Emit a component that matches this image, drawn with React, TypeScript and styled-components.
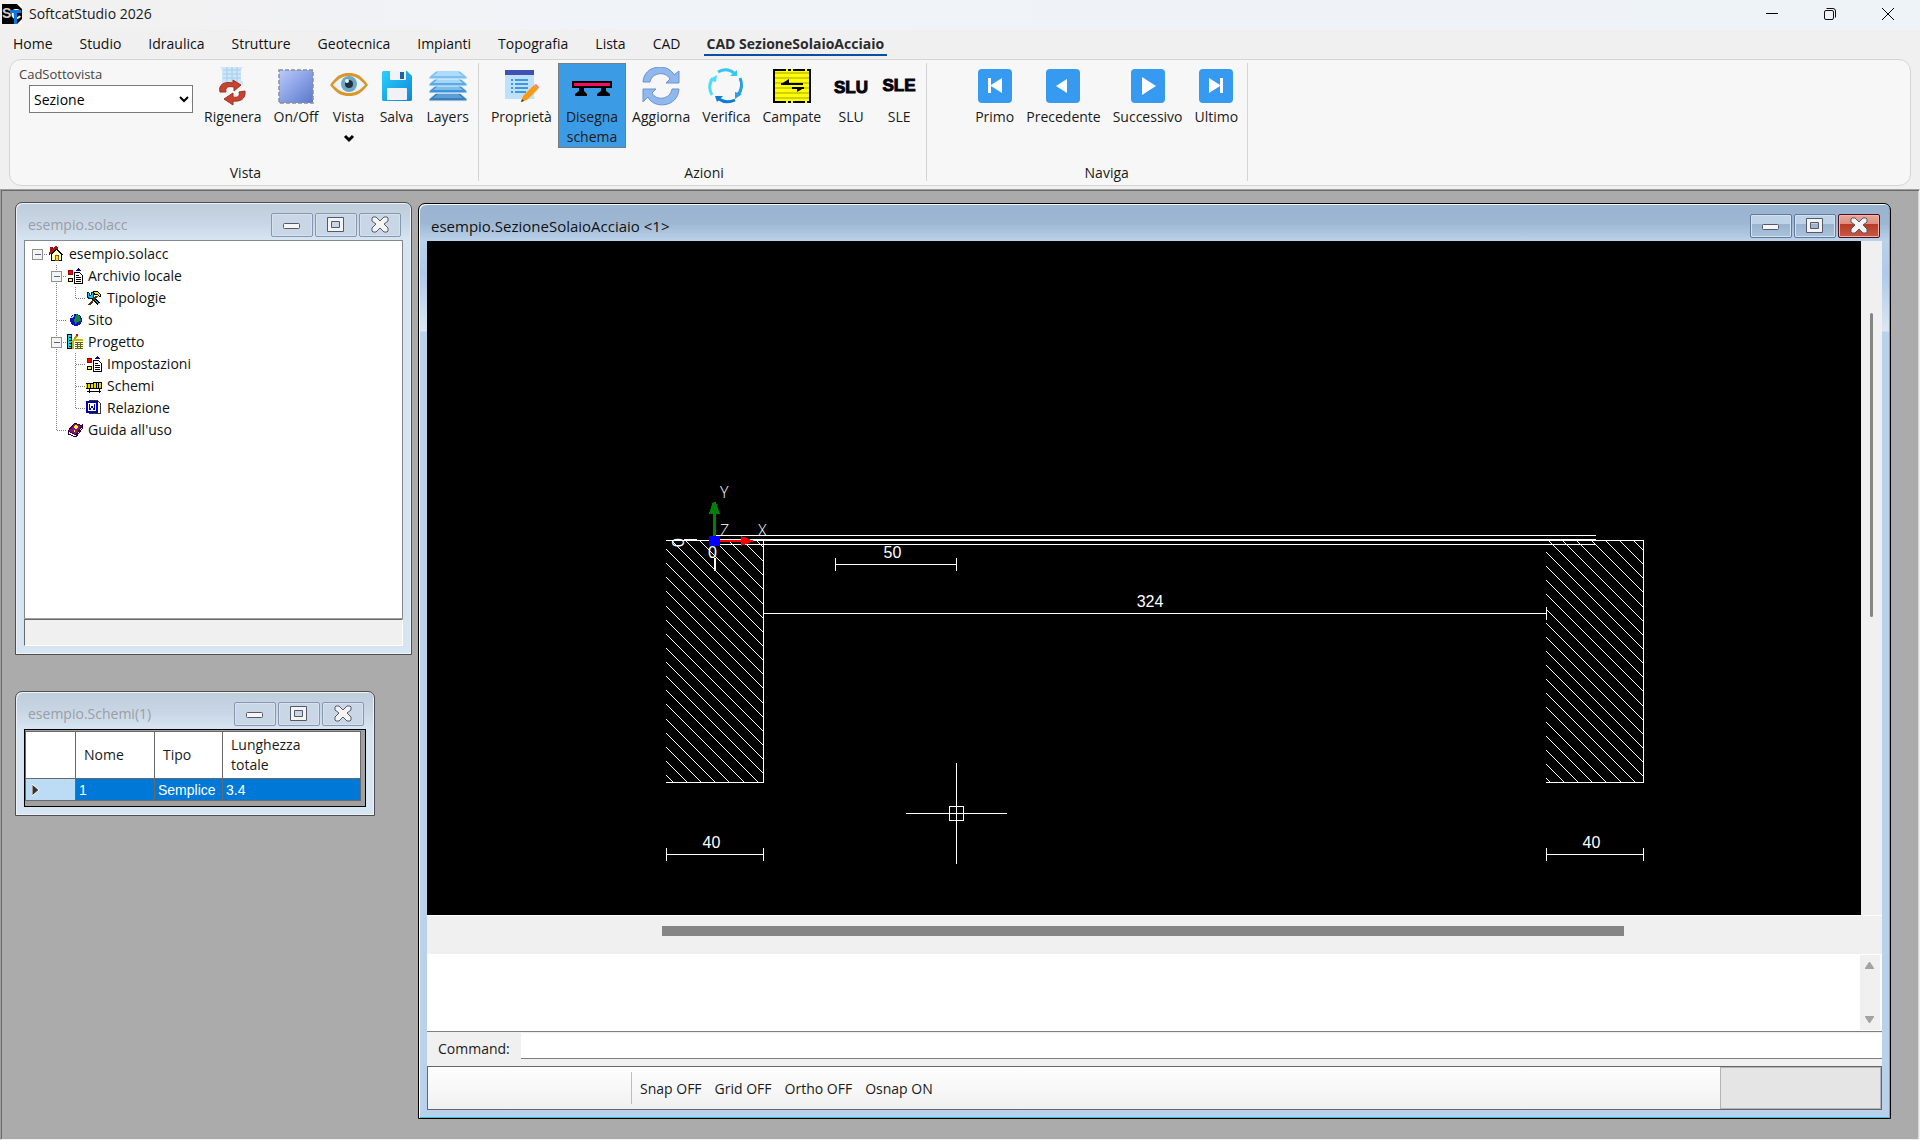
import React from 'react';
import styled, { createGlobalStyle, css } from 'styled-components';

const GlobalStyle = createGlobalStyle`
  *, *::before, *::after { box-sizing: border-box; }
  body {
    margin: 0;
    background: #f0f0f0;
    color: #1a1a1a;
    font: 14px/20px "Open Sans", "Noto Sans", sans-serif;
  }
  button, input, select, textarea { font: inherit; color: inherit; }
  button { cursor: default; }
`;

/* ---------- application shell ---------- */

const Shell = styled.div`
  display: flex;
  flex-direction: column;
  height: 100vh;
  min-height: 1000px;
`;

const TitleBar = styled.header`
  display: flex;
  align-items: center;
  height: 29px;
  padding: 0 3px 1px 2px;
  gap: 7px;
  background: linear-gradient(90deg, #f3f1f0, #f0f3f8 30%, #eef3f7);
`;

const AppTitle = styled.h1`
  flex: 1;
  margin: 0;
  font-size: 14px;
  font-weight: 400;
`;

const SystemButtons = styled.div`
  display: flex;
`;

const SystemButton = styled.button`
  display: grid;
  place-items: center;
  width: 58px;
  height: 28px;
  padding: 0;
  border: 0;
  background: none;
`;

const TabBar = styled.nav`
  display: flex;
  gap: 27px;
  height: 30px;
  padding: 5px 13px 0;
`;

const Tab = styled.a<{ $active?: boolean }>`
  height: 22px;
  color: #111;
  text-decoration: none;
  ${(p) =>
    p.$active &&
    css`
      margin-left: -4px;
      padding: 0 3px;
      border-bottom: 2px solid #0b4da2;
      color: #2b2b2b;
      font-weight: 700;
    `}
`;

/* ---------- ribbon ---------- */

const Ribbon = styled.section`
  display: flex;
  height: 127px;
  margin: 0 9px 3px;
  padding: 3px 0 4px;
  border: 1px solid #d4d4d4;
  border-radius: 12px;
  background: #f7f7f7;
`;

const RibbonGroup = styled.section<{ $inset?: boolean }>`
  display: flex;
  flex-direction: column;
  justify-content: space-between;
  margin-left: ${(p) => (p.$inset ? '36px' : 0)};
  padding: 0 3px 0 6px;
  border-right: 1px solid #d4d4d4;
`;

const GroupTools = styled.div`
  display: flex;
  align-items: flex-start;
`;

const GroupName = styled.h2`
  margin: 0;
  font-size: 14px;
  font-weight: 400;
  line-height: 16px;
  text-align: center;
`;

const SubviewField = styled.div`
  display: flex;
  flex-direction: column;
  gap: 1px;
  width: 182px;
  padding: 1px 5px 0 3px;
`;

const SubviewLabel = styled.label`
  color: #444;
  font-size: 13px;
`;

const SubviewSelect = styled.select`
  height: 28px;
  margin-left: 10px;
  border: 1px solid #7a7a7a;
  border-radius: 0;
  background: #fff;
  color: #000;
`;

const ToolButton = styled.button<{ $active?: boolean }>`
  display: flex;
  flex-direction: column;
  align-items: center;
  min-width: 48px;
  padding: 3px ${(p) => (p.$active ? 7 : 5)}px 0;
  border: 1px solid ${(p) => (p.$active ? '#7c7c7c' : 'transparent')};
  background: ${(p) => (p.$active ? '#3c9be5' : 'none')};
  white-space: pre;

  svg {
    display: block;
    margin: 0 -2px;
  }
`;

/* ---------- MDI desktop ---------- */

const Desktop = styled.main`
  position: relative;
  flex: 1;
  overflow: hidden;
  border: 1px solid;
  border-color: #a0a0a0 #f0f0f0 #f0f0f0 #a0a0a0;
  background: #ababab;
  box-shadow: inset 1px 1px #696969, inset -1px 0 #d8d8d8;
`;

const activeFrame = css`
  border-color: #000;
  background: linear-gradient(#99b3d0 0, #9db7d3 19px, #b9d1ea 37px, #afc9e8 70px, #dbe7f4 127px, #b9d1ea 128px);
  box-shadow: inset 1px 1px #fff, inset -1px -1px #35c0dc;
`;

const idleFrame = css`
  border-color: #4e4e4e;
  background: linear-gradient(#bfcddb 0, #c8d5e4 19px, #d7e4f2 37px);
  box-shadow: inset 1px 1px #eef3f9, inset -1px -1px #eef3f9;
`;

const Frame = styled.section<{ $active?: boolean }>`
  position: absolute;
  display: flex;
  flex-direction: column;
  padding: 0 8px 8px;
  border: 1px solid;
  border-radius: 7px 7px 0 0;
  ${(p) => (p.$active ? activeFrame : idleFrame)}
`;

const TreeFrame = styled(Frame)`
  left: 14px;
  top: 12px;
  width: 397px;
  height: 453px;
`;

const SchemeFrame = styled(Frame)`
  left: 14px;
  top: 501px;
  width: 360px;
`;

const CadFrame = styled(Frame)`
  left: 417px;
  right: 28px;
  top: 13px;
  bottom: 20px;
`;

const FrameBar = styled.header`
  display: flex;
  flex: none;
  gap: 2px;
  height: 37px;
  padding: 10px 2px 0 4px;
`;

const FrameTitle = styled.h3<{ $active?: boolean }>`
  flex: 1;
  margin: 0;
  color: ${(p) => (p.$active ? '#111' : '#9a9ea4')};
  font-size: ${(p) => (p.$active ? 15 : 14)}px;
  font-weight: 400;
  line-height: 24px;
`;

const frameButtonFill = {
  idle: 'background: #c9d6e5; border-color: #8797b3; box-shadow: inset 0 0 0 1px #d6e1ed;',
  active:
    'background: linear-gradient(#bfd3e8 42%, #9ab3cf 43%, #a9c2dc); border-color: #64799a; box-shadow: inset 0 0 0 1px #d3e2f1;',
  close:
    'background: linear-gradient(#e8a799, #dc8c7d 42%, #b83a24 43%, #c65a45); border-color: #4a1020; box-shadow: inset 0 0 0 1px #eeb4a8;',
};

const FrameButton = styled.button<{ $fill: keyof typeof frameButtonFill }>`
  display: grid;
  place-items: center;
  width: 42px;
  height: 24px;
  padding: 0;
  border: 1px solid;
  border-radius: 2px;
  ${(p) => frameButtonFill[p.$fill]}
`;

/* ---------- project tree ---------- */

const Tree = styled.ul`
  flex: 1;
  margin: 0;
  padding: 2px 3px;
  border: 1px solid #828790;
  background: #fff;
  list-style: none;
`;

const TreeRow = styled.li`
  display: flex;
  align-items: center;
  height: 22px;
`;

const TreeText = styled.span`
  margin-left: 5px;
  color: #111;
`;

const Expander = styled.button`
  width: 19px;
  height: 22px;
  padding: 0;
  border: 0;
  background: none;
`;

const TreeStatus = styled.div`
  height: 27px;
  border: 1px solid;
  border-color: #696969 #fff #fff #696969;
  background: #f0f0f0;
  box-shadow: 0 -1px #a0a0a0;
`;

/* ---------- scheme table ---------- */

const GridBox = styled.div`
  padding: 1px 5px 5px 0;
  border: 1px solid #000;
  background: #a0a0a0;
`;

const Grid = styled.table`
  width: 100%;
  table-layout: fixed;
  border-collapse: collapse;
  background: #fff;
`;

const HeadCell = styled.th<{ $width: number }>`
  width: ${(p) => p.$width}px;
  height: 47px;
  padding: 0 8px;
  border: 1px solid #696969;
  font-weight: 400;
  text-align: left;
`;

const Cell = styled.td`
  height: 22px;
  padding: 0 3px;
  border: 1px solid #696969;
  background: #0078d7;
  color: #fff;
  font: 14px/20px "Liberation Sans", sans-serif;
`;

const RowHead = styled.th`
  padding: 0 6px;
  border: 1px solid #696969;
  background: #bbdcf4;
  text-align: left;

  svg { display: block; }
`;

/* ---------- CAD window ---------- */

const Viewport = styled.div`
  display: flex;
  flex: 1;
  min-height: 0;
`;

const Canvas = styled.svg`
  flex: 1;
  min-width: 0;
  height: 100%;
  background: #000;
`;

const VerticalTrack = styled.div`
  display: flex;
  justify-content: center;
  width: 21px;
  padding: 72px 0 0;
  background: #f0f0f0;
`;

const VerticalThumb = styled.div`
  width: 3px;
  height: 304px;
  background: #858585;
  border-radius: 2px;
`;

const HorizontalTrack = styled.div`
  height: 39px;
  padding: 10px 258px 0 235px;
  border-top: 1px solid #fff;
  background: #f0f0f0;
`;

const HorizontalThumb = styled.div`
  height: 10px;
  background: #858585;
`;

const LogRow = styled.div`
  display: flex;
  height: 78px;
  padding: 1px 2px 1px 0;
  border-bottom: 1px solid #7f7f7f;
  background: #fff;
`;

const Log = styled.textarea`
  flex: 1;
  padding: 4px;
  border: 0;
  outline: 0;
  resize: none;
  background: #fff;
`;

const LogScroll = styled.div`
  display: flex;
  flex-direction: column;
  justify-content: space-between;
  width: 20px;
  background: #f0f0f0;
`;

const ScrollArrow = styled.button`
  display: grid;
  place-items: center;
  height: 21px;
  padding: 0 1px 0 0;
  border: 0;
  background: none;
`;

const CommandRow = styled.div`
  display: flex;
  height: 34px;
  padding: 1px 0 7px 11px;
  background: #f0f0f0;
`;

const CommandLabel = styled.label`
  width: 83px;
  line-height: 32px;
`;

const CommandInput = styled.input`
  flex: 1;
  min-width: 0;
  padding: 0 4px;
  border: 0;
  border-bottom: 1px solid #7f7f7f;
  outline: 0;
  background: #fff;
`;

const StatusBar = styled.footer`
  display: flex;
  align-items: center;
  height: 44px;
  border: 1px solid #666;
  background: linear-gradient(#fdfdfd, #f8f8f8 50%, #f0f0f0);
`;

const Coordinates = styled.div`
  width: 204px;
  height: 32px;
  border-right: 1px solid #bdbdbd;
`;

const Modes = styled.div`
  display: flex;
  flex: 1;
  gap: 13px;
  padding: 2px 0 0 8px;
`;

const ModeButton = styled.button`
  padding: 0;
  border: 0;
  background: none;
`;

const StatusPane = styled.div`
  width: 161px;
  height: 42px;
  border: 1px solid #b4b4b4;
  background: #e5e5e5;
`;

/* ---------- icons ---------- */

const AppLogo = () => (
  <svg width="20" height="20" viewBox="0 0 20 20" fontFamily="Liberation Sans, sans-serif" fontWeight="700" fontSize="14">
    <rect width="20" height="20" fill="#000" />
    <path d="M15 0h5v5zM15 20h5v-5z" fill="#fff" />
    <text x="0" y="14" fill="#d8cccb">S</text>
    <text x="9" y="15" fill="#fff">C</text>
    <path d="M8 6h11v3h-4v11h-3V9H8z" fill="#0a78e0" />
  </svg>
);

type IconProps = { children: React.ReactNode };
const Icon40 = ({ children }: IconProps) => (
  <svg width="40" height="40" viewBox="0 0 40 40" aria-hidden="true">{children}</svg>
);

const RegenerateIcon = () => (
  <Icon40>
    <path d="M7 0h23l-2 3v10l2 2v3H9V3z" fill="#cfe6fa" />
    <path d="M10 3h18M10 7h18M10 11h18M14 0v15M19 0v15M24 0v15" stroke="#a3cdf0" />
    <path d="M7 25c-2-7 4-11 13-9v-3l8 5-7 6v-4c-6-1-9 0-8 5z" fill="#c8432f" stroke="#9c3324" />
    <path d="M32 24c1 8-5 11-12 10v4l-9-6 9-6v4c5 1 7-1 6-5z" fill="#c8432f" stroke="#9c3324" />
  </Icon40>
);

const ToggleIcon = () => (
  <Icon40>
    <defs>
      <linearGradient id="toggle" x1="0" y1="0" x2="1" y2="1">
        <stop offset="0" stopColor="#bccbfb" /><stop offset="1" stopColor="#5877cd" />
      </linearGradient>
    </defs>
    <rect x="3" y="3" width="34" height="33" fill="url(#toggle)" />
    <rect x="3" y="3" width="34" height="33" fill="none" stroke="#8a8e9c" strokeWidth="1.5" strokeDasharray="4 2" />
  </Icon40>
);

const EyeIcon = () => (
  <Icon40>
    <path d="M1 18C8 8 13 6 20 6s12 2 19 12c-7 9-12 11-19 11S8 27 1 18z" fill="#d9962a" />
    <path d="M4 18C10 11 14 9 20 9s10 2 16 9c-6 6-10 8-16 8S10 24 4 18z" fill="#e9f5fb" />
    <circle cx="20" cy="17" r="8" fill="#6ea6c4" />
    <circle cx="20" cy="17" r="4" fill="#22313c" />
    <circle cx="18" cy="14" r="2" fill="#dff0f8" />
  </Icon40>
);

const SaveIcon = () => (
  <Icon40>
    <defs>
      <linearGradient id="disk" x1="0" y1="0" x2="1" y2="1">
        <stop offset="0" stopColor="#2cd0fb" /><stop offset="1" stopColor="#0d86d8" />
      </linearGradient>
    </defs>
    <path d="M6 4h24l5 5v24l-1 1H6l-1-1V5z" fill="url(#disk)" />
    <path d="M13 4h16v8q0 1-1 1H14q-1 0-1-1z" fill="#f1f1f6" />
    <rect x="23" y="5" width="4" height="7" fill="#1b62ad" />
    <rect x="10" y="21" width="20" height="12" rx="1" fill="#f1f1f6" />
  </Icon40>
);

const LayersIcon = () => (
  <Icon40>
    {[
      { y: 26, side: '#3a7fba', top: '#5b9fd6' },
      { y: 18, side: '#4292d6', top: '#7dbdec' },
      { y: 11, side: '#5aaae6', top: '#a5d6f8' },
      { y: 4, side: '#7cc0f2', top: '#aedcfa' },
    ].map(({ y, side, top }) => (
      <g key={y}>
        <path d={`M8 ${y}h24l7 6v2H1v-2z`} fill={side} stroke="#e6f4fd" />
        <path d={`M10 ${y + 1}h20l5 4H5z`} fill={top} />
      </g>
    ))}
  </Icon40>
);

const PropertiesIcon = () => (
  <Icon40>
    <rect x="4" y="4" width="29" height="28" fill="#bfe0fb" />
    <rect x="4" y="3" width="29" height="5" fill="#3f51b5" />
    <path d="M10 13h2M14 13h13M10 17h2M14 17h13M10 21h2M14 21h13M10 25h2M14 25h11" stroke="#3d97e6" strokeWidth="2" />
    <path d="M20 35l2-6 11-11 4 4-11 11z" fill="#fb9a12" />
    <path d="M33 18l2-1 3 3-1 2z" fill="#ef7d7d" />
    <path d="M20 35l1-3 2 2z" fill="#333" />
  </Icon40>
);

const BeamIcon = () => (
  <Icon40>
    <rect x="0" y="14" width="40" height="7" fill="#000" />
    <rect x="2" y="16" width="36" height="3" fill="#fb0a60" />
    <path d="M7 21h5v3l3 3v2H3v-2l4-3zM29 21h5v3l4 3v2H25v-2l4-3z" fill="#000" />
  </Icon40>
);

const RefreshIcon = () => (
  <Icon40>
    <g fill="#8fb8ef" stroke="#6b93cf">
      <path d="M2 15C3-3 28-4 33 8l5-4v12H25l4-4C25 4 11 5 9 15z" />
      <path d="M38 22c-1 19-26 20-31 8l-5 5V22h13l-4 4c4 8 18 7 20-4z" />
    </g>
  </Icon40>
);

const VerifyIcon = () => (
  <Icon40>
    <g fill="none" strokeWidth="3">
      <path d="M12 5q9-5 16 1" stroke="#36c5f5" />
      <path d="M34 11q4 9-2 17" stroke="#2a9ee6" />
      <path d="M29 33q-9 4-16-1" stroke="#0d7cd6" />
      <path d="M6 28q-5-9 1-17" stroke="#4fdcfb" />
    </g>
    <path d="M24 9h7V3z" fill="#36c5f5" /><path d="M29 25v7l7-5z" fill="#2a9ee6" />
    <path d="M9 29h8l-6 6z" fill="#0d7cd6" /><path d="M3 13l8-5-1 7z" fill="#4fdcfb" />
  </Icon40>
);

const SpansIcon = () => (
  <Icon40>
    <rect x="2" y="2" width="36" height="34" fill="#ff0" />
    <path d="M2 6h36M2 11h36M2 16h36M2 21h36M2 26h36M2 31h36" stroke="#d2d200" strokeWidth="2" />
    <path d="M2 3h36M2 35h36" stroke="#000" strokeWidth="2" strokeDasharray="12 2 3 2" />
    <path d="M2 2v34M38 2v34" stroke="#000" strokeWidth="2" />
    <path d="M9 17h22M20 21h12" stroke="#000" strokeWidth="2" />
    <path d="M9 17l8-5v5zM32 21l-7 4v-4z" fill="#000" />
  </Icon40>
);

const LimitStateIcon = ({ name, baseline }: { name: string; baseline: number }) => (
  <Icon40>
    <text
      x="20" y={baseline}
      fontFamily="Liberation Sans, sans-serif" fontWeight="700" fontSize="17" textAnchor="middle"
      fill="#05050f" stroke="#05050f"
    >
      {name}
    </text>
  </Icon40>
);

const NavIcon = ({ d }: { d: string }) => (
  <Icon40>
    <rect x="3" y="2" width="34" height="34" rx="4" fill="#369af0" />
    <path d={d} fill="#fff" />
  </Icon40>
);

const ChevronIcon = () => (
  <svg width="12" height="20" viewBox="0 0 12 20" aria-hidden="true">
    <path d="M2 9l4 4 4-4" fill="none" stroke="#000" strokeWidth="3" />
  </svg>
);

const Icon16 = ({ children }: IconProps) => (
  <svg width="16" height="16" viewBox="0 0 16 16" shapeRendering="crispEdges" aria-hidden="true">
    {children}
  </svg>
);

const HouseIcon = () => (
  <Icon16>
    <path d="M3.5 8v6.5h10V8l-5-5z" fill="#ffffc8" stroke="#000" />
    <path d="M1 9l7-7 7 7" fill="none" stroke="#000" />
    <path d="M1 8l7-7 2 2" fill="none" stroke="#b01010" strokeWidth="2" />
    <path d="M2 1h3v5H2z" fill="#a01010" />
    <path d="M7.5 9.5h3v5h-3z" fill="#ffe000" stroke="#806000" />
  </Icon16>
);

const ArchiveIcon = () => (
  <Icon16>
    <rect x="1" y="2" width="5" height="5" fill="#900" />
    <rect x="2" y="3" width="3" height="3" fill="#f00" />
    <circle cx="3.5" cy="12" r="2" fill="#ff0" stroke="#000" />
    <path d="M8 3h7L11.5 0z" fill="#00009c" />
    <path d="M7.500 4.500h5l3 3v8h-8z" fill="#fff" stroke="#000" />
    <path d="M9 7.5h3M9 9.500h5M9 11.500h5M9 13.500h5" stroke="#000" />
  </Icon16>
);

const ToolsIcon = () => (
  <Icon16>
    <path d="M5 6l8 8" stroke="#000" strokeWidth="3" />
    <path d="M1 2l2 1v2h2l1-3 2 2-1 4-3 1-3-2z" fill="#18c8e8" stroke="#024" />
    <path d="M6 7l7 7" stroke="#18c8e8" />
    <path d="M11 6l-8 9" stroke="#503000" strokeWidth="2" />
    <path d="M7 2l4-1 4 4-1 2-3-3-2 1z" fill="#ffe800" stroke="#000" />
  </Icon16>
);

const GlobeIcon = () => (
  <Icon16>
    <circle cx="9" cy="8" r="6" fill="#1010c0" />
    <path d="M9 2l4 2 1 5-4 1-1 3-2-4 1-3z" fill="#108838" />
    <path d="M4 5l2-2 1 1-2 3z" fill="#b0d8ff" />
  </Icon16>
);

const ProjectIcon = () => (
  <Icon16>
    <rect x="0.5" y="0.5" width="4" height="14" fill="#18d8e8" stroke="#000" />
    <path d="M2 3.5h2M2 6.5h2M2 9.5h2M2 12.5h2" stroke="#000" />
    <path d="M5 8l5-6" stroke="#b0a000" strokeWidth="2" />
    <path d="M9 0h2v2h-2z" fill="#f00" />
    <path d="M6 6h10M6 6v9" stroke="#c8b800" strokeWidth="2" />
    <path d="M8 8.5h8M8 10.5h8M8 12.5h8M8 14.5h8M10.5 9v6M13.5 9v6" stroke="#6a6400" />
  </Icon16>
);

const SchemeIcon = () => (
  <Icon16>
    <path d="M0 6h7v5H0zM7 4h9v7H7z" fill="#e8d800" />
    <path
      d="M1.5 6v5M4.5 6v5M7.5 5v6M10.5 5v6M12.5 5v6M15.5 4v7M7 4.5h9M0 5.5h7M0 10.5h16M1 13.5h14M3.5 11v4M13.5 11v4"
      stroke="#000"
    />
  </Icon16>
);

const ReportIcon = () => (
  <Icon16>
    <path d="M3.5 0.5h8l3 3v10h-11z" fill="#fff" stroke="#333" />
    <rect x="1" y="2" width="10" height="10" fill="#fff" stroke="#0000a8" strokeWidth="2" />
    <path d="M3 4l1 6 2-4 2 4 1-6" fill="none" stroke="#0000c8" />
  </Icon16>
);

const HelpBookIcon = () => (
  <Icon16>
    <path d="M1 9l7-8 7 3-6 9z" fill="#8c0a8c" stroke="#300030" />
    <path d="M1 9v3l8 3 6-8V4l-6 9z" fill="#fff" stroke="#300030" />
    <path d="M7 5l2-1 1 1-2 2M7 9h1" fill="none" stroke="#ff0" strokeWidth="2" />
  </Icon16>
);

/* ---------- ribbon data ---------- */

type Tool = { label: string; icon: React.ReactNode; active?: boolean; menu?: boolean };

const viewTools: Tool[] = [
  { label: 'Rigenera', icon: <RegenerateIcon /> },
  { label: 'On/Off', icon: <ToggleIcon /> },
  { label: 'Vista', icon: <EyeIcon />, menu: true },
  { label: 'Salva', icon: <SaveIcon /> },
  { label: 'Layers', icon: <LayersIcon /> },
];

const actionTools: Tool[] = [
  { label: 'Proprietà', icon: <PropertiesIcon /> },
  { label: 'Disegna\nschema', icon: <BeamIcon />, active: true },
  { label: 'Aggiorna', icon: <RefreshIcon /> },
  { label: 'Verifica', icon: <VerifyIcon /> },
  { label: 'Campate', icon: <SpansIcon /> },
  { label: 'SLU', icon: <LimitStateIcon name="SLU" baseline={26} /> },
  { label: 'SLE', icon: <LimitStateIcon name="SLE" baseline={24} /> },
];

const navigationTools: Tool[] = [
  { label: 'Primo', icon: <NavIcon d="M13 11h3v7l11-7v15l-11-7v7h-3z" /> },
  { label: 'Precedente', icon: <NavIcon d="M13 19l11-7v14z" /> },
  { label: 'Successivo', icon: <NavIcon d="M14 10l14 9-14 9z" /> },
  { label: 'Ultimo', icon: <NavIcon d="M27 11h-3v7l-11-7v15l11-7v7h3z" /> },
];

const Tools = ({ items }: { items: Tool[] }) => (
  <>
    {items.map((t) => (
      <ToolButton key={t.label} type="button" $active={t.active} aria-pressed={t.active}>
        {t.icon}
        {t.label}
        {t.menu && <ChevronIcon />}
      </ToolButton>
    ))}
  </>
);

const tabs = ['Home', 'Studio', 'Idraulica', 'Strutture', 'Geotecnica', 'Impianti', 'Topografia', 'Lista', 'CAD', 'CAD SezioneSolaioAcciaio'];

/* ---------- MDI window pieces ---------- */

const WindowBar = ({ title, active }: { title: string; active?: boolean }) => {
  const fill = active ? 'active' : 'idle';
  return (
    <FrameBar>
      <FrameTitle $active={active}>{title}</FrameTitle>
      <FrameButton type="button" $fill={fill} aria-label="Riduci a icona">
        <svg width="18" height="18" viewBox="0 0 18 18">
          <rect x="0.5" y="7.5" width="16" height="5" rx="1" fill="#f6f6f6" stroke="#55586a" />
        </svg>
      </FrameButton>
      <FrameButton type="button" $fill={fill} aria-label="Ingrandisci">
        <svg width="18" height="18" viewBox="0 0 18 18">
          <path fillRule="evenodd" d="M0.5 1.5h16v14h-16zM4.5 5.5v6h8v-6z" fill="#f4f4f4" stroke="#55586a" />
        </svg>
      </FrameButton>
      <FrameButton type="button" $fill={active ? 'close' : 'idle'} aria-label="Chiudi">
        <svg width="18" height="18" viewBox="0 0 18 18">
          <path
            d="M2 1h3l4 4 4-4h3l1 1v3l-4 3 4 4v3l-1 1h-3l-4-4-4 4H2l-1-1v-3l4-4-4-3V2z"
            fill="#f4f4f4" stroke="#55586a" strokeLinejoin="round"
          />
        </svg>
      </FrameButton>
    </FrameBar>
  );
};

type Guide = 'blank' | 'line' | 'tee' | 'elbow' | 'root' | 'node';

const guidePath: Record<Guide, string> = {
  blank: '',
  line: 'M9.5 0v22',
  tee: 'M9.5 0v22M10 11.5h9',
  elbow: 'M9.5 0v12M10 11.5h9',
  root: 'M10 11.5h9',
  node: 'M9.5 0v22M10 11.5h9',
};

const GuideCell = ({ kind }: { kind: Guide }) => {
  const expandable = kind === 'root' || kind === 'node';
  const drawing = (
    <svg width="19" height="22" viewBox="0 0 19 22" shapeRendering="crispEdges" display="block">
      <path d={guidePath[kind]} stroke="#808080" strokeDasharray="1 1" />
      {expandable && (
        <>
          <rect x="4.5" y="6.5" width="10" height="10" fill="#f4f4f4" stroke="#919191" />
          <path d="M7 11.5h6" stroke="#4b63a7" />
        </>
      )}
    </svg>
  );
  return expandable ? <Expander type="button" aria-label="Comprimi">{drawing}</Expander> : drawing;
};

const TreeIcon = styled.span`
  display: flex;
  padding-left: 1px;
`;

const treeRows: { guides: Guide[]; icon: React.ReactNode; text: string }[] = [
  { guides: ['root'], icon: <HouseIcon />, text: 'esempio.solacc' },
  { guides: ['blank', 'node'], icon: <ArchiveIcon />, text: 'Archivio locale' },
  { guides: ['blank', 'line', 'elbow'], icon: <ToolsIcon />, text: 'Tipologie' },
  { guides: ['blank', 'tee'], icon: <GlobeIcon />, text: 'Sito' },
  { guides: ['blank', 'node'], icon: <ProjectIcon />, text: 'Progetto' },
  { guides: ['blank', 'line', 'tee'], icon: <ArchiveIcon />, text: 'Impostazioni' },
  { guides: ['blank', 'line', 'tee'], icon: <SchemeIcon />, text: 'Schemi' },
  { guides: ['blank', 'line', 'elbow'], icon: <ReportIcon />, text: 'Relazione' },
  { guides: ['blank', 'elbow'], icon: <HelpBookIcon />, text: "Guida all'uso" },
];

/* ---------- CAD drawing; units are pixels from the section origin ---------- */

const Wall = ({ id, x, first }: { id: string; x: number; first: number }) => (
  <g>
    <clipPath id={id}><rect x={x} y="0" width="98" height="242" /></clipPath>
    <g clipPath={`url(#${id})`}>
      {Array.from({ length: 24 }, (_, k) => (
        <path key={k} d={`M${x} ${Math.round(first + (k - 7) * 14.13)}l98 98`} />
      ))}
    </g>
    <path d={`M${x} 241.5h97.5V0`} />
  </g>
);

const Dimension = ({ x, y, length, text }: { x: number; y: number; length: number; text: string }) => (
  <g>
    <path d={`M${x} ${y - 6}v13M${x + length} ${y - 6}v13M${x} ${y + 0.5}h${length}`} />
    <text x={x + length / 2 - 3.5} y={y - 6} textAnchor="middle" fill="#fff" stroke="none">{text}</text>
  </g>
);

const SectionDrawing = () => (
  <Canvas role="img" aria-label="Sezione solaio acciaio">
    <g
      transform="translate(287 300)"
      stroke="#fff" fill="none" shapeRendering="crispEdges"
      fontFamily="Liberation Sans, sans-serif" fontSize="16"
    >
      <Wall id="wall-left" x={-48} first={8} />
      <Wall id="wall-right" x={832} first={11} />
      <path d="M-48 -.5H0M882 -.5H930M2 -5.5H882M2 3.5H882" />
      <path d="M2 -1H882" strokeWidth="2" />
      <Dimension x={121.5} y={23} length={121} text="50" />
      <path d="M50 72.5H832.5M832.5 66v13" />
      <text x="436" y="66" textAnchor="middle" fill="#fff" stroke="none">324</text>
      <Dimension x={-47.5} y={313} length={97} text="40" />
      <Dimension x={832.5} y={313} length={97} text="40" />
      <path d="M-30 -1h13M1 17v13" strokeWidth="2" />
      <g fill="#fff" stroke="none">
        <text x="-6" y="17">0</text>
        <text transform="translate(-30 6) rotate(-90)">0</text>
        <g fontFamily="Open Sans, sans-serif" fontWeight="300">
          <text x="6" y="-43">Y</text>
          <text x="6" y="-5">Z</text>
          <text x="44" y="-5">X</text>
        </g>
      </g>
      <g stroke="none">
        <path d="M-1 -5v-22h-4l4-12h3l4 12H2v22z" fill="#008000" />
        <path d="M6 -1h21v-4l13 5-13 5V1H6z" fill="#f00" />
        <rect x="-5" y="-5" width="11" height="10" fill="#00f" />
      </g>
      <path d="M192 272.5H293M242.5 222V323M235.5 265.5h14v14h-14z" />
    </g>
  </Canvas>
);

/* ---------- page ---------- */

export default function App() {
  return (
    <>
      <GlobalStyle />
      <Shell>
        <TitleBar>
          <AppLogo />
          <AppTitle>SoftcatStudio 2026</AppTitle>
          <SystemButtons>
            <SystemButton type="button" aria-label="Riduci a icona">
              <svg width="12" height="12" viewBox="0 0 12 12"><path d="M0 5.5h12" stroke="#000" /></svg>
            </SystemButton>
            <SystemButton type="button" aria-label="Ripristina">
              <svg width="12" height="12" viewBox="0 0 12 12" fill="none" stroke="#111">
                <rect x=".5" y="2.5" width="9" height="9" rx="1.5" />
                <path d="M2.5 .5H9a2.5 2.5 0 0 1 2.5 2.5v6.5" />
              </svg>
            </SystemButton>
            <SystemButton type="button" aria-label="Chiudi">
              <svg width="12" height="12" viewBox="0 0 12 12"><path d="M0 0l12 12M12 0L0 12" stroke="#000" /></svg>
            </SystemButton>
          </SystemButtons>
        </TitleBar>

        <TabBar>
          {tabs.map((name, i) => (
            <Tab key={name} href="#" $active={i === tabs.length - 1}>{name}</Tab>
          ))}
        </TabBar>

        <Ribbon>
          <RibbonGroup>
            <GroupTools>
              <SubviewField>
                <SubviewLabel htmlFor="subview">CadSottovista</SubviewLabel>
                <SubviewSelect id="subview" defaultValue="Sezione">
                  <option>Sezione</option>
                </SubviewSelect>
              </SubviewField>
              <Tools items={viewTools} />
            </GroupTools>
            <GroupName>Vista</GroupName>
          </RibbonGroup>
          <RibbonGroup>
            <GroupTools><Tools items={actionTools} /></GroupTools>
            <GroupName>Azioni</GroupName>
          </RibbonGroup>
          <RibbonGroup $inset>
            <GroupTools><Tools items={navigationTools} /></GroupTools>
            <GroupName>Naviga</GroupName>
          </RibbonGroup>
        </Ribbon>

        <Desktop>
          <TreeFrame>
            <WindowBar title="esempio.solacc" />
            <Tree>
              {treeRows.map((row) => (
                <TreeRow key={row.text}>
                  {row.guides.map((g, i) => <GuideCell key={i} kind={g} />)}
                  <TreeIcon>{row.icon}</TreeIcon>
                  <TreeText>{row.text}</TreeText>
                </TreeRow>
              ))}
            </Tree>
            <TreeStatus />
          </TreeFrame>

          <SchemeFrame>
            <WindowBar title="esempio.Schemi(1)" />
            <GridBox>
              <Grid>
                <thead>
                  <tr>
                    <HeadCell $width={50} aria-label="Riga" />
                    <HeadCell $width={79}>Nome</HeadCell>
                    <HeadCell $width={68}>Tipo</HeadCell>
                    <HeadCell $width={138}>Lunghezza<br />totale</HeadCell>
                  </tr>
                </thead>
                <tbody>
                  <tr>
                    <RowHead scope="row" aria-label="Riga corrente">
                      <svg width="8" height="12" viewBox="0 0 8 12"><path d="M0 0l7 6-7 6z" fill="#333" stroke="#fff" /></svg>
                    </RowHead>
                    <Cell>1</Cell>
                    <Cell>Semplice</Cell>
                    <Cell>3.4</Cell>
                  </tr>
                </tbody>
              </Grid>
            </GridBox>
          </SchemeFrame>

          <CadFrame $active>
            <WindowBar title="esempio.SezioneSolaioAcciaio <1>" active />
            <Viewport>
              <SectionDrawing />
              <VerticalTrack><VerticalThumb /></VerticalTrack>
            </Viewport>
            <HorizontalTrack><HorizontalThumb /></HorizontalTrack>
            <LogRow>
              <Log aria-label="Cronologia comandi" readOnly />
              <LogScroll>
                <ScrollArrow type="button" aria-label="Scorri su">
                  <svg width="9" height="7" viewBox="0 0 9 7"><path d="M4 0h1l4 6v1H0V6z" fill="#a3a3a3" /></svg>
                </ScrollArrow>
                <ScrollArrow type="button" aria-label="Scorri giù">
                  <svg width="9" height="7" viewBox="0 0 9 7"><path d="M4 7h1l4-6V0H0v1z" fill="#a3a3a3" /></svg>
                </ScrollArrow>
              </LogScroll>
            </LogRow>
            <CommandRow>
              <CommandLabel htmlFor="command">Command:</CommandLabel>
              <CommandInput id="command" type="text" />
            </CommandRow>
            <StatusBar>
              <Coordinates />
              <Modes>
                {['Snap OFF', 'Grid OFF', 'Ortho OFF', 'Osnap ON'].map((m) => (
                  <ModeButton key={m} type="button">{m}</ModeButton>
                ))}
              </Modes>
              <StatusPane />
            </StatusBar>
          </CadFrame>
        </Desktop>
      </Shell>
    </>
  );
}
